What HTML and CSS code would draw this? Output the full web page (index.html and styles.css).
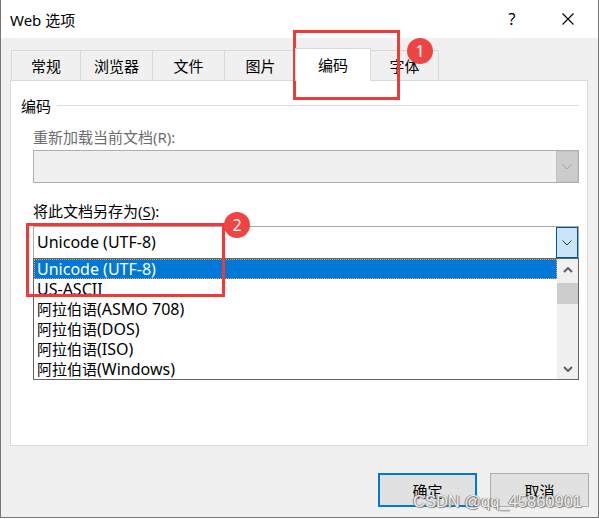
FILE: index.html
```html
<!DOCTYPE html>
<html lang="zh-CN">
<head>
<meta charset="utf-8">
<title>Web 选项</title>
<link rel="stylesheet" href="styles.css">
</head>
<body>
<div class="window">
  <div class="titlebar">
    <span class="title">Web 选项</span>
    <span class="help">?</span>
    <svg class="close" width="12" height="12" viewBox="0 0 12 12"><path d="M0.5 0.5 L11.5 11.5 M11.5 0.5 L0.5 11.5" stroke="#000" stroke-width="1.1" fill="none"/></svg>
  </div>
  <div class="tabs">
    <div class="tab t1">常规</div>
    <div class="tab t2">浏览器</div>
    <div class="tab t3">文件</div>
    <div class="tab t4">图片</div>
    <div class="tab active">编码</div>
    <div class="tab t6">字体</div>
  </div>
  <div class="panel">
    <div class="group-head"><span>编码</span><span class="line"></span></div>
    <div class="field">
      <div class="label disabled">重新加载当前文档(R):</div>
      <div class="combo off">
        <div class="value"></div>
        <div class="drop off-drop"><svg width="10" height="6" viewBox="0 0 10 6"><polyline points="0.5,0.5 5,5 9.5,0.5" fill="none" stroke="#a3a3a3" stroke-width="1"/></svg></div>
      </div>
      <div class="label s-label">将此文档另存为(<u>S</u>):</div>
      <div class="combo on">
        <div class="value"><span class="en">Unicode (UTF-8)</span></div>
        <div class="drop on-drop"><svg width="10" height="6" viewBox="0 0 10 6"><polyline points="0.5,0.5 5,5 9.5,0.5" fill="none" stroke="#3c3c3c" stroke-width="1"/></svg></div>
      </div>
      <div class="list">
        <div class="items">
          <div class="item sel"><span class="en">Unicode (UTF-8)</span></div>
          <div class="item"><span class="en">US-ASCII</span></div>
          <div class="item">阿拉伯语<span class="en">(ASMO 708)</span></div>
          <div class="item">阿拉伯语<span class="en">(DOS)</span></div>
          <div class="item">阿拉伯语<span class="en">(ISO)</span></div>
          <div class="item">阿拉伯语<span class="en">(Windows)</span></div>
        </div>
        <div class="scroll">
          <div class="arrow"><svg width="10" height="6" viewBox="0 0 10 6"><polyline points="1,5 5,1 9,5" fill="none" stroke="#606060" stroke-width="2"/></svg></div>
          <div class="thumb"></div>
          <div class="arrow down"><svg width="10" height="6" viewBox="0 0 10 6"><polyline points="1,1 5,5 9,1" fill="none" stroke="#606060" stroke-width="2"/></svg></div>
        </div>
      </div>
    </div>
  </div>
  <div class="footer">
    <div class="btn ok">确定</div>
    <div class="btn">取消</div>
  </div>
</div>
<div class="mark mark1"></div>
<div class="badge badge1">1</div>
<div class="mark mark2"></div>
<div class="badge badge2">2</div>
<div class="watermark">CSDN @qq_45860901</div>
</body>
</html>
```
FILE: styles.css
```css
* { box-sizing: border-box; }
body {
  margin: 0;
  width: 599px;
  height: 519px;
  background: #ffffff;
  font-family: "Noto Sans", "Noto Sans CJK SC", sans-serif;
  font-size: 15px;
  color: #000;
  overflow: hidden;
  position: relative;
}
.window {
  width: 599px;
  height: 518px;
  background: #f0f0f0;
  border: 1px solid #767676;
  border-top: none;
  display: flex;
  flex-direction: column;
}
.titlebar {
  height: 38px;
  background: #fff;
  display: flex;
  align-items: center;
  padding-left: 9px;
  flex: none;
}
.title { font-size: 15px; line-height: 20px; padding-top: 1px; }
.help {
  margin-left: auto;
  width: 16px;
  text-align: center;
  font-size: 16px;
  line-height: 20px;
  margin-right: 42px;
}
.close { margin-right: 24px; }

.tabs {
  height: 33px;
  margin-top: 10px;
  margin-bottom: -1px;
  padding-left: 10px;
  display: flex;
  align-items: flex-end;
  flex: none;
}
.tab {
  height: 31px;
  border: 1px solid #d9d9d9;
  border-bottom: none;
  background: #f0f0f0;
  display: flex;
  align-items: center;
  justify-content: center;
  margin-left: -1px;
  padding-bottom: 1px;
}
.t1 { width: 70px; margin-left: 0; }
.t2, .t3, .t4 { width: 73px; }
.tab.active {
  width: 76px;
  height: 33px;
  margin-left: -2px;
  background: #fff;
  position: relative;
  z-index: 1;
  padding-bottom: 2px;
}
.t6 { width: 69px; margin-left: -1px; }

.panel {
  margin-left: 9px;
  width: 578px;
  height: 366px;
  background: #fff;
  border: 1px solid #d9d9d9;
  flex: none;
}
.group-head {
  display: flex;
  align-items: center;
  height: 20px;
  margin-top: 14px;
  padding-left: 10px;
  padding-right: 8px;
}
.group-head .line {
  flex: 1;
  border-top: 1px solid #dcdcdc;
  margin-left: 6px;
}
.field { padding-left: 22px; padding-right: 7px; }
.label { height: 20px; line-height: 20px; margin-top: 12px; }
.label.disabled { color: #6d6d6d; }
.s-label { margin-top: 18px; }
.s-label u { text-underline-offset: 2px; }

.combo {
  display: flex;
  width: 546px;
}
.combo.off {
  margin-top: 3px;
  height: 33px;
  border: 1px solid #adadad;
  background: #f0f0f0;
}
.combo.on {
  margin-top: 5px;
  height: 32px;
  border: 1px solid #a9a9a9;
  border-bottom: none;
  background: #fff;
}
.value {
  flex: 1;
  padding-left: 3px;
  line-height: 31px;
  white-space: nowrap;
}
.drop {
  width: 22px;
  height: 31px;
  display: flex;
  align-items: center;
  justify-content: center;
}
.off-drop { background: #cccccc; border: 1px solid #c4c4c4; }
.on-drop { background: #cce4f7; border: 1px solid #005499; }
.en { font-size: 16px; }

.list {
  width: 546px;
  height: 122px;
  border: 1px solid #646464;
  display: flex;
  background: #fff;
}
.items { flex: 1; }
.item {
  height: 20px;
  line-height: 20px;
  padding-left: 3px;
  white-space: nowrap;
}
.item.sel {
  background: #0078d7;
  color: #fff;
  border: 1px dotted #f0a040;
  padding-left: 2px;
  line-height: 18px;
}
.scroll {
  width: 21px;
  background: #f0f0f0;
  display: flex;
  flex-direction: column;
}
.arrow {
  height: 21px;
  display: flex;
  align-items: center;
  justify-content: center;
}
.arrow.down { margin-top: auto; }
.thumb {
  height: 21px;
  margin-top: 3px;
  background: #cdcdcd;
}

.footer {
  display: flex;
  justify-content: flex-end;
  gap: 13px;
  margin-top: 27px;
  padding-right: 9px;
  flex: none;
}
.btn {
  width: 99px;
  height: 34px;
  background: #e1e1e1;
  border: 1px solid #adadad;
  display: flex;
  align-items: center;
  justify-content: center;
}
.btn.ok { border: 2px solid #0078d7; }

.mark {
  position: absolute;
  border: 3px solid #f03a3a;
}
.mark1 { left: 293px; top: 30px; width: 107px; height: 70px; }
.mark2 { left: 26px; top: 223px; width: 199px; height: 74px; }
.badge {
  position: absolute;
  width: 26px;
  height: 26px;
  border-radius: 50%;
  background: #f04444;
  color: #fff;
  font-size: 16px;
  line-height: 26px;
  text-align: center;
}
.badge1 { left: 407px; top: 38px; }
.badge2 { left: 224px; top: 212px; }
.watermark {
  position: absolute;
  left: 413px;
  top: 493px;
  font-family: "Liberation Sans", Arial, sans-serif;
  font-size: 16.5px;
  line-height: 1;
  color: rgba(255, 255, 255, 0.9);
  text-shadow: 0 0 1px #6a6a6a, 1px 1px 1px #8a8a8a, -1px 0 0 #9a9a9a;
  white-space: nowrap;
}
```
